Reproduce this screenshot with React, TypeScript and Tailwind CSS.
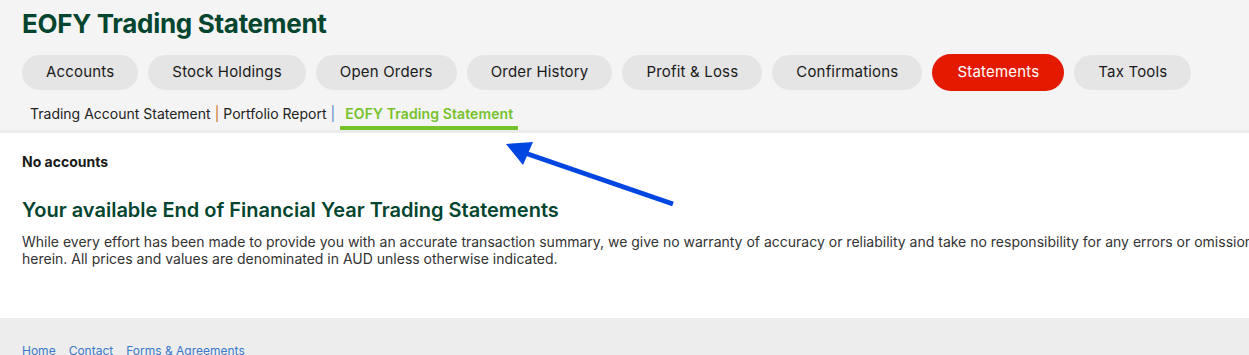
const tabs = [
  "Accounts",
  "Stock Holdings",
  "Open Orders",
  "Order History",
  "Profit & Loss",
  "Confirmations",
  "Statements",
  "Tax Tools",
];

export default function App() {
  return (
    <div className="relative w-full min-h-[355px] overflow-hidden bg-white font-['Inter','Liberation_Sans',sans-serif]">
      <div className="w-[1400px]">
        <header className="bg-[#f4f4f4] border-b-[3px] border-[#ebebeb] pt-[8px] px-[22px]">
          <h1 className="text-[26px] leading-[32px] font-bold text-[#03452f] tracking-[-0.3px]">EOFY Trading Statement</h1>
          <nav className="flex items-center gap-[10px] mt-[14px]">
            {tabs.map(t =>
              t === "Statements" ? (
                <span key={t} className="h-[37px] px-[25px] flex items-center rounded-full bg-[#e31a00] text-white text-[15px] tracking-[0.2px]">
                  {t}
                </span>
              ) : (
                <span key={t} className="h-[35px] px-[24px] flex items-center rounded-full bg-[#e5e5e5] text-[#1a1a1a] text-[15px] tracking-[0.18px]">
                  {t}
                </span>
              )
            )}
          </nav>
          <div className="flex items-end mt-[12px] pl-[8px] text-[14px] text-[#222]">
            <span className="pb-[6px]">Trading Account Statement</span>
            <span className="pb-[6px] px-[4px] text-[#c8731e]">|</span>
            <span className="pb-[6px]">Portfolio Report</span>
            <span className="pb-[6px] pl-[4px] text-[#4a8ac8]">|</span>
            <span className="ml-[5px] px-[5px] pb-[2px] border-b-[4px] border-[#76c22b] font-semibold text-[#76c22b] tracking-[0.1px]">EOFY Trading Statement</span>
          </div>
        </header>
        <main className="px-[22px] pt-[20px] pb-[51px]">
          <p className="text-[14px] font-bold text-[#1a1a1a] leading-[18px]">No accounts</p>
          <h2 className="mt-[26px] text-[20px] font-semibold text-[#03452f] leading-[26px]">
            Your available End of Financial Year Trading Statements
          </h2>
          <p className="mt-[10px] text-[14px] leading-[17px] text-[#333] max-w-[1330px]">
            While every effort has been made to provide you with an accurate transaction summary, we give no warranty of accuracy or reliability and take no responsibility for any errors or omissions contained herein. All prices and values are denominated in AUD unless otherwise indicated.
          </p>
        </main>
        <footer className="bg-[#ededed] h-[60px] px-[22px] pt-[24px]">
          <div className="flex gap-[13px] text-[12px] text-[#3b78c9]">
            <span>Home</span>
            <span>Contact</span>
            <span>Forms &amp; Agreements</span>
          </div>
        </footer>
      </div>
      <svg className="absolute left-0 top-0 pointer-events-none" width="1249" height="355" viewBox="0 0 1249 355">
        <line x1="673" y1="204" x2="522" y2="152" stroke="#0047e1" strokeWidth="5" />
        <polygon points="506,144 533,142 523,165" fill="#0047e1" />
      </svg>
    </div>
  );
}
